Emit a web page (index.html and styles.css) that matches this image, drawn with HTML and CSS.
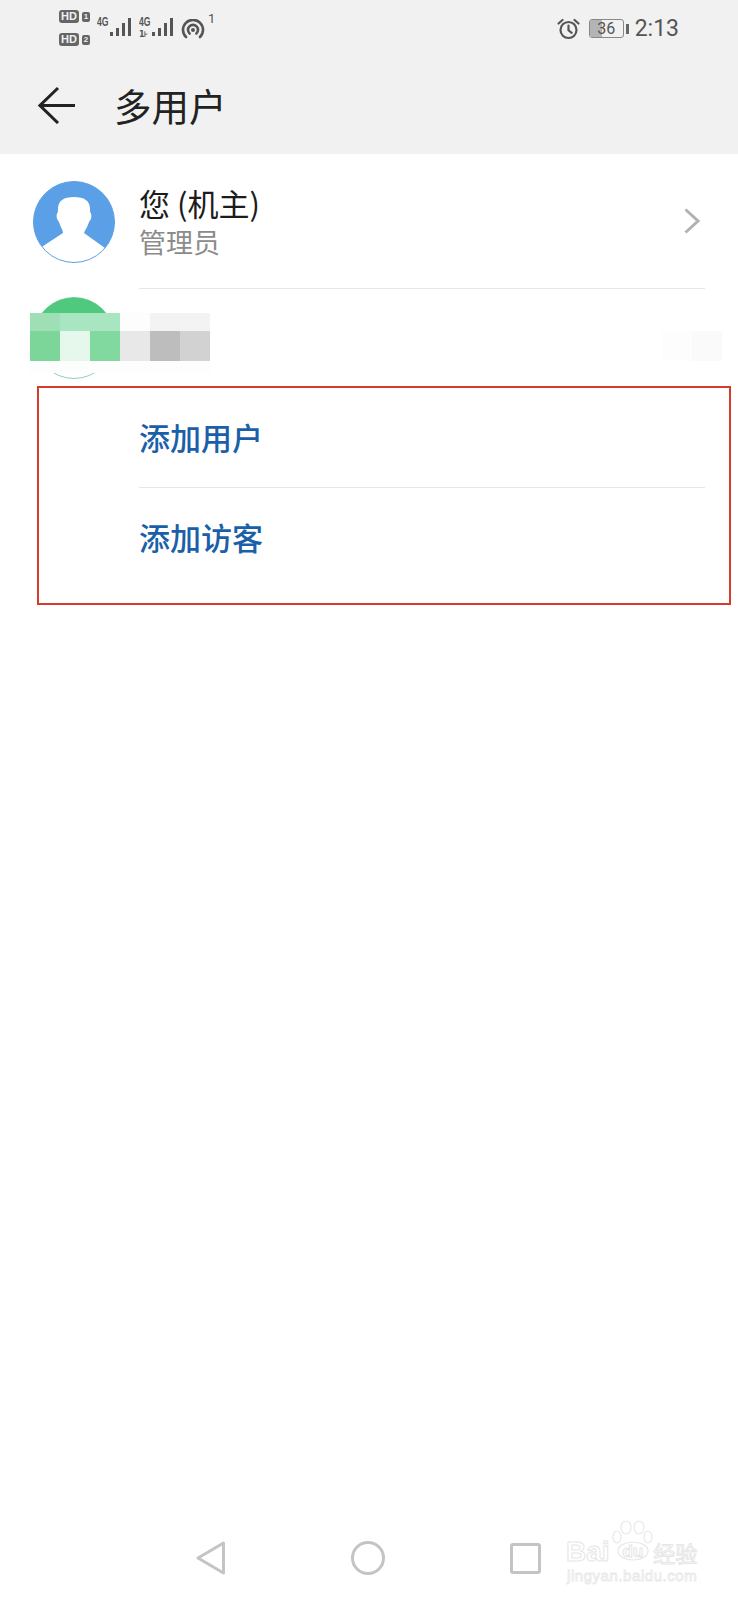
FILE: index.html
```html
<!DOCTYPE html>
<html lang="zh-CN">
<head>
  <meta charset="UTF-8" />
  <meta name="viewport" content="width=device-width, initial-scale=1.0"/>
  <title>多用户</title>
  <link rel="stylesheet" href="styles.css">
</head>
<body>
  <div class="page">
    <header class="top">
      <div class="status">
        <div class="status-left">
          <div class="sims">
            <div class="sim"><span class="hd">HD</span><span class="sim-no">1</span></div>
            <div class="sim"><span class="hd">HD</span><span class="sim-no">2</span></div>
          </div>
          <div class="net">
            <span class="net-label">4G</span>
            <svg width="24" height="22" viewBox="0 0 24 22"><g fill="#555"><rect x="1" y="16" width="3" height="4"/><rect x="7" y="12" width="3" height="8"/><rect x="13" y="7" width="3" height="13"/><rect x="19" y="2" width="3" height="18"/></g></svg>
          </div>
          <div class="net">
            <span class="net-label">4G</span>
            <small class="net-sub">1⊦</small>
            <svg width="24" height="22" viewBox="0 0 24 22"><g fill="#555"><rect x="1" y="16" width="3" height="4"/><rect x="7" y="12" width="3" height="8"/><rect x="13" y="7" width="3" height="13"/><rect x="19" y="2" width="3" height="18"/></g></svg>
          </div>
          <svg class="hotspot" width="24" height="20" viewBox="0 0 24 20"><g fill="none" stroke="#555" stroke-width="2.6" stroke-linecap="round"><path d="M5 18a10 10 0 1 1 14 0"/><path d="M8.600 14.500a5 5 0 1 1 6.800 0"/></g><circle cx="12" cy="11" r="2" fill="#555"/></svg>
          <span class="hotspot-count">1</span>
        </div>
        <div class="status-right">
          <svg width="23" height="22" viewBox="0 0 23 22"><g fill="none" stroke="#555" stroke-width="2.2" stroke-linecap="round"><circle cx="11.500" cy="12" r="8"/><path d="M11.500 7.500v4.800l3.200 2.600"/><path d="M1.500 5.500l4-3.500"/><path d="M21.500 5.500l-4-3.500"/></g></svg>
          <div class="battery">
            <div class="battery-body">
              <div class="battery-fill" style="width:36%"></div>
              <span class="battery-text">36</span>
            </div>
            <div class="battery-nub"></div>
          </div>
          <span class="clock">2:13</span>
        </div>
      </div>
      <div class="toolbar">
        <svg class="back" width="38" height="38" viewBox="0 0 38 38"><path d="M20 2L2 19.500l18 17.500M2 19.500h35" fill="none" stroke="#222" stroke-width="3"/></svg>
        <h1>多用户</h1>
      </div>
    </header>

    <main class="list">
      <div class="row user-row">
        <svg class="avatar" width="82" height="82" viewBox="0 0 82 82">
          <circle cx="41" cy="41" r="40.500" fill="#fff" stroke="#5b9fe6"/>
          <path d="M9 65.800A40.500 40.500 0 1 1 72 67L51 52C52 49 55 45 56 41C59 38 59 33 57 31C58 20 52 16 41 16C30 16 24 20 25 31C23 33 23 38 26 41C27 45 30 49 30 52Z" fill="#5b9fe6"/>
        </svg>
        <div class="row-body with-line">
          <div class="user-text">
            <div class="user-name">您 (机主)</div>
            <div class="user-role">管理员</div>
          </div>
          <svg class="chevron" width="16" height="26" viewBox="0 0 16 26"><path d="M1.500 1.500L14 13 1.500 24.500" fill="none" stroke="#b2b2b2" stroke-width="3"/></svg>
        </div>
      </div>

      <div class="row other-row">
        <svg class="avatar" width="82" height="82" viewBox="0 0 82 82">
          <circle cx="41" cy="41" r="40.500" fill="#fff" stroke="#8fd0b0"/>
          <path d="M9 65.800A40.500 40.500 0 1 1 72 67L51 52C52 49 55 45 56 41C59 38 59 33 57 31C58 20 52 16 41 16C30 16 24 20 25 31C23 33 23 38 26 41C27 45 30 49 30 52Z" fill="#4fc97d"/>
        </svg>
        <div class="mosaic">
          <i class="m-a"></i><i class="m-b"></i><i class="m-b"></i><i class="m-c"></i><i class="m-d"></i><i class="m-d"></i>
          <i class="m-e"></i><i class="m-f"></i><i class="m-g"></i><i class="m-h"></i><i class="m-i"></i><i class="m-j"></i>
          <i class="m-k"></i><i class="m-k"></i><i class="m-k"></i><i class="m-l"></i><i class="m-l"></i><i class="m-l"></i>
        </div>
        <div class="mosaic-right"></div>
      </div>

      <div class="row add-row">
        <div class="row-body with-line">添加用户</div>
      </div>
      <div class="row add-row">
        <div class="row-body">添加访客</div>
      </div>

      <div class="red-box"></div>
    </main>

    <nav class="navbar">
      <svg width="30" height="34" viewBox="0 0 30 34"><path d="M27.500 2L2 17l25.500 15z" fill="none" stroke="#c4c4c4" stroke-width="3" stroke-linejoin="round"/></svg>
      <svg width="34" height="34" viewBox="0 0 34 34"><circle cx="17" cy="17" r="15.500" fill="none" stroke="#c4c4c4" stroke-width="3"/></svg>
      <svg width="31" height="31" viewBox="0 0 31 31"><rect x="1.500" y="1.500" width="28" height="28" rx="1.500" fill="none" stroke="#c4c4c4" stroke-width="3"/></svg>
    </nav>

    <div class="watermark">
      <svg class="paw" width="42" height="41" viewBox="0 0 42 41">
        <g fill="#fff" stroke="#e8e8e8" stroke-width="1.200">
          <ellipse cx="5" cy="17" rx="4" ry="6"/>
          <ellipse cx="14" cy="7.500" rx="5" ry="6.500"/>
          <ellipse cx="27" cy="7.500" rx="5" ry="6.500"/>
          <ellipse cx="36" cy="17" rx="4" ry="6"/>
          <ellipse cx="21" cy="31" rx="15" ry="9"/>
        </g>
      </svg>
      <div class="wm-line">
        <span class="wm-bai">Bai</span><span class="wm-du">du</span><span class="wm-cn">经验</span>
      </div>
      <div class="wm-url">jingyan.baidu.com</div>
    </div>
  </div>
</body>
</html>
```

FILE: styles.css
```css
* {
  box-sizing: border-box;
}

body {
  margin: 0;
  background: #fff;
  font-family: "Noto Sans CJK SC", "Noto Sans", sans-serif;
  color: #1c1c1c;
}

.page {
  position: relative;
  display: flex;
  flex-direction: column;
  height: 1600px;
  overflow: hidden;
}

/* status bar + title */
.top {
  height: 154px;
  background: #f1f1f1;
}

.status {
  display: flex;
  justify-content: space-between;
  height: 56px;
  padding: 0 59px;
  color: #555;
}

.status-left {
  display: flex;
  align-items: flex-start;
}

.sims {
  display: flex;
  flex-direction: column;
  gap: 10px;
  padding-top: 10px;
  width: 38px;
}

.sim {
  display: flex;
  align-items: center;
  gap: 3px;
  height: 13px;
}

.hd {
  width: 20px;
  height: 13px;
  border-radius: 3px;
  background: #666;
  color: #f1f1f1;
  font: bold 11px/13px "Liberation Sans", sans-serif;
  text-align: center;
}

.sim-no {
  width: 8px;
  height: 10px;
  border-radius: 2px;
  background: #666;
  color: #f1f1f1;
  font: bold 8px/10px "Liberation Sans", sans-serif;
  text-align: center;
}

.net {
  position: relative;
  display: flex;
  align-items: flex-start;
  width: 42px;
  padding-top: 16px;
}

.net-label {
  width: 12px;
  font: bold 11px/11px "Liberation Sans", sans-serif;
  transform: scale(0.78, 1.15);
  transform-origin: left top;
  white-space: nowrap;
}

.net-sub {
  position: absolute;
  top: 31px;
  left: 0;
  font: bold 8px/7px "DejaVu Sans", sans-serif;
  letter-spacing: -1px;
}

.hotspot {
  margin-top: 19px;
}

.hotspot-count {
  margin: 11px 0 0 3px;
  font: 13px/16px Roboto, sans-serif;
}

.status-right {
  display: flex;
  align-items: center;
  gap: 9px;
  padding-top: 1px;
}

.battery {
  display: flex;
  align-items: center;
  gap: 2px;
}

.battery-body {
  position: relative;
  width: 35px;
  height: 19px;
  border: 1px solid #888;
  border-radius: 3px;
  overflow: hidden;
}

.battery-fill {
  height: 100%;
  background: #b4b4b4;
}

.battery-text {
  position: absolute;
  top: 0;
  left: 0;
  width: 100%;
  color: #555;
  font: 16px/17px Roboto, sans-serif;
  text-align: center;
}

.battery-nub {
  width: 3px;
  height: 10px;
  background: #666;
}

.clock {
  margin-left: -3px;
  font: 23px/28px Roboto, sans-serif;
}

.toolbar {
  display: flex;
  align-items: center;
  height: 98px;
  padding-left: 38px;
  gap: 38px;
}

.toolbar h1 {
  margin: 0;
  font-size: 37.5px;
  font-weight: 400;
  line-height: 50px;
  color: #222;
}

/* list */
.list {
  position: relative;
  flex: 1;
}

.row {
  display: flex;
  padding-left: 33px;
}

.user-row {
  height: 135px;
}

.user-row .avatar {
  margin-top: 27px;
}

.row-body {
  flex: 1;
  margin-right: 33px;
}

.with-line {
  border-bottom: 1px solid #e6e6e6;
}

.user-row .row-body {
  display: flex;
  justify-content: space-between;
  align-items: center;
  margin-left: 24px;
}

.user-text {
  margin-top: -1px;
}

.user-name {
  font-size: 31px;
  line-height: 40px;
}

.user-role {
  margin-top: 2px;
  font-size: 27px;
  line-height: 34px;
  color: #8b8b8b;
}

.chevron {
  margin-right: 5px;
}

.other-row {
  position: relative;
  height: 99px;
  padding-top: 8px;
}

/* censored second user */
.mosaic {
  position: absolute;
  top: 24px;
  left: 30px;
  display: grid;
  grid-template-columns: repeat(6, 30px);
  grid-template-rows: 18px 30px 12px;
}

.m-a { background: #9fdfb6; }
.m-b { background: #a8e6c1; }
.m-c { background: #fdfdfd; }
.m-d { background: #f3f3f3; }
.m-e { background: #7cd69a; }
.m-f { background: #e6f7ec; }
.m-g { background: #82d99f; }
.m-h { background: #e8e8e8; }
.m-i { background: #bdbdbd; }
.m-j { background: #d2d2d2; }
.m-k { background: #fbfefc; }
.m-l { background: #fdfdfd; }

.mosaic-right {
  position: absolute;
  top: 42px;
  left: 692px;
  width: 30px;
  height: 30px;
  background: #fafafa;
  box-shadow: -30px 0 0 #fdfdfd;
}

.add-row {
  height: 100px;
  padding-left: 139px;
  color: #1a60a8;
  font-size: 31px;
  font-weight: 500;
}

.add-row .row-body {
  display: flex;
  align-items: center;
  padding-bottom: 3px;
}

/* annotation drawn on top of the screenshot */
.red-box {
  position: absolute;
  top: 232px;
  left: 37px;
  width: 694px;
  height: 219px;
  border: 2px solid #d83a2c;
}

.navbar {
  position: absolute;
  top: 1541px;
  left: 0;
  width: 100%;
  display: flex;
  align-items: center;
  padding-left: 196px;
  gap: 125px;
}

.watermark {
  position: absolute;
  top: 1519px;
  left: 566px;
  width: 134px;
  height: 68px;
  color: transparent;
}

.paw {
  position: absolute;
  top: 1px;
  left: 46px;
}

.wm-line {
  position: absolute;
  top: 17px;
  left: 0;
  display: flex;
  align-items: center;
  white-space: nowrap;
}

.wm-bai {
  font: bold 28px/32px "Liberation Sans", sans-serif;
  -webkit-text-stroke: 1px #e6e6e6;
}

.wm-du {
  margin-left: 13px;
  font: bold 17px/32px "Liberation Sans", sans-serif;
  -webkit-text-stroke: 1px #e6e6e6;
}

.wm-cn {
  margin-left: 10px;
  font-size: 22px;
  line-height: 32px;
  -webkit-text-stroke: 1px #e6e6e6;
}

.wm-url {
  position: absolute;
  top: 48px;
  left: 1px;
  font: 15px/18px "Liberation Sans", sans-serif;
  letter-spacing: 0.55px;
  white-space: nowrap;
  -webkit-text-stroke: 0.8px #e8e8e8;
}
```
